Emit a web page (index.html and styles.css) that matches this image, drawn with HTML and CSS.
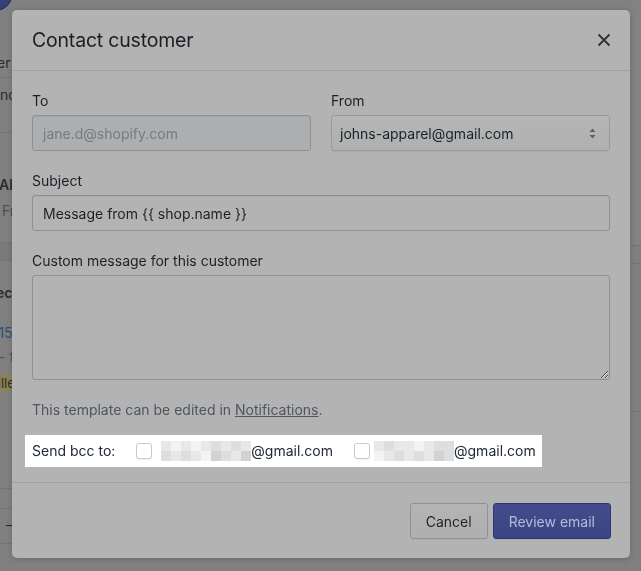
FILE: index.html
```html
<!DOCTYPE html>
<html lang="en">
<head>
    <meta charset="UTF-8">
    <title>Contact customer</title>
    <link rel="stylesheet" href="styles.css">
</head>
<body>
    <div class="page">
        <div class="side">
            <div class="side-top"><span class="avatar"></span></div>
            <div class="side-row r-name"><span class="t-name">Customer</span></div>
            <div class="side-row r-phone"><span class="t-phone">Phone no</span></div>
            <div class="side-row r-about"><b class="t-about">About</b><span class="t-from">From store</span></div>
            <div class="side-row r-band"></div>
            <div class="side-row r-order">
                <b class="t-recent">Recent orders</b>
                <span class="t-num">#1015</span>
                <span class="t-src">- from Online Store</span>
                <span class="t-badge">Unfulfilled</span>
            </div>
            <div class="side-row r-gap"></div>
            <div class="side-row r-dash"><span class="t-dash">–</span></div>
        </div>
        <div class="side side-right">
            <div class="right-top"></div>
            <div class="right-band"></div>
            <div class="right-mid"></div>
        </div>
    </div>

    <div class="backdrop">
        <div class="modal">
            <div class="modal-head">
                <h2>Contact customer</h2>
                <svg class="close" width="14" height="14" viewBox="0 0 14 14">
                    <path d="M1.5 1.5l11 11M12.5 1.5l-11 11" stroke="#2f3337" stroke-width="1.8" fill="none"/>
                </svg>
            </div>

            <div class="modal-body">
                <div class="cols">
                    <div class="field">
                        <div class="label">To</div>
                        <div class="input disabled">jane.d@shopify.com</div>
                    </div>
                    <div class="field">
                        <div class="label">From</div>
                        <div class="input select">
                            <span>johns-apparel@gmail.com</span>
                            <svg width="7" height="11" viewBox="0 0 7 11">
                                <path d="M3.5 0.5L6.5 4H0.5z M3.5 10.5L0.5 7H6.5z" fill="#5b6168"/>
                            </svg>
                        </div>
                    </div>
                </div>

                <div class="field">
                    <div class="label">Subject</div>
                    <div class="input">Message from {{ shop.name }}</div>
                </div>

                <div class="field">
                    <div class="label">Custom message for this customer</div>
                    <textarea class="textarea"></textarea>
                </div>

                <p class="help">This template can be edited in <a href="#">Notifications</a>.</p>

                <div class="bcc">
                    <span>Send bcc to:</span>
                    <span class="check first"></span>
                    <span class="blur">
                        <i class="s2"></i><i class="s1"></i><i class="s2"></i><i class="s1"></i><i class="s2"></i><i class="s3"></i><i class="s2"></i><i class="s3"></i><i class="s2"></i>
                        <i class="s3"></i><i class="s2"></i><i class="s3"></i><i class="s2"></i><i class="s1"></i><i class="s4"></i><i class="s3"></i><i class="s2"></i><i class="s4"></i>
                    </span>
                    <span>@gmail.com</span>
                    <span class="check"></span>
                    <span class="blur short">
                        <i class="s2"></i><i class="s3"></i><i class="s2"></i><i class="s2"></i><i class="s1"></i><i class="s2"></i><i class="s3"></i><i class="s3"></i>
                        <i class="s1"></i><i class="s2"></i><i class="s3"></i><i class="s2"></i><i class="s3"></i><i class="s2"></i><i class="s4"></i><i class="s3"></i>
                    </span>
                    <span>@gmail.com</span>
                </div>
            </div>

            <div class="modal-foot">
                <button class="btn">Cancel</button>
                <button class="btn primary">Review email</button>
            </div>
        </div>
    </div>
</body>
</html>
```

FILE: styles.css
```css
body
{
    margin: 0;
    height: 571px;
    overflow: hidden;
    background: #808080;
    font-family: Inter, "Liberation Sans", sans-serif;
    font-size: 14px;
    color: #1c2127;
}

/* page behind the modal */
.page
{
    display: flex;
    justify-content: space-between;
}
.side
{
    width: 12px;
    white-space: nowrap;
    color: #2a2d31;
    line-height: 20px;
}
.side-right
{
    width: 9px;
}
.side-top
{
    display: flow-root;
    height: 45px;
}
.avatar
{
    display: block;
    width: 34px;
    height: 34px;
    margin: -24px 0 0 -22px;
    border-radius: 50%;
    background: #34407a;
    box-shadow: 0 0 0 1px #2a3050;
}
.side-row
{
    border-bottom: 1px solid #747474;
}
.side-row span, .side-row b
{
    display: block;
}
.r-name
{
    height: 24px;
    padding-top: 8px;
}
.t-name
{
    margin-left: -54px;
}
.r-phone
{
    height: 47px;
    padding-top: 7px;
}
.t-phone
{
    margin-left: -46px;
}
.r-about
{
    height: 67px;
    padding-top: 42px;
}
.t-about
{
    margin-left: -1px;
    font-weight: 600;
}
.t-from
{
    margin: 6px 0 0 2px;
    color: #4a4f55;
}
.r-band
{
    height: 17px;
    background: #7a7a7a;
}
.r-order
{
    height: 205px;
    padding-top: 22px;
}
.t-recent
{
    margin-left: -13px;
    font-weight: 600;
}
.t-num
{
    margin: 20px 0 0 -25px;
    color: #2c4f78;
}
.t-src
{
    margin: 4px 0 0 -1px;
    color: #4a4f55;
}
.side-row .t-badge
{
    display: inline-block;
    margin: 8px 0 0 -48px;
    padding: 0 8px;
    line-height: 16px;
    font-size: 13px;
    background: #8e8452;
    border-radius: 8px;
}
.r-gap
{
    height: 19px;
}
.r-dash
{
    height: 28px;
    padding-top: 6px;
}
.t-dash
{
    margin-left: 6px;
}
.right-top
{
    height: 245px;
    background: #838383;
}
.right-band
{
    height: 17px;
    border-top: 1px solid #747474;
    border-bottom: 1px solid #747474;
}
.right-mid
{
    height: 147px;
    border-bottom: 1px solid #747474;
}

/* modal */
.backdrop
{
    position: fixed;
    top: 0;
    left: 0;
    right: 0;
    bottom: 0;
    padding: 10px 0 0 12px;
}
.modal
{
    display: flex;
    flex-direction: column;
    width: 618px;
    height: 548px;
    background: #b3b3b3;
    border-radius: 5px;
    box-shadow: 0 1px 6px rgba(0, 0, 0, .18);
}
.modal-head
{
    display: flex;
    align-items: center;
    justify-content: space-between;
    padding: 16px 19px 16px 20px;
    border-bottom: 1px solid #9ea0a2;
}
.modal-head h2
{
    margin: 0;
    font-size: 19.5px;
    font-weight: 400;
    line-height: 28px;
    letter-spacing: -0.2px;
    color: #1b1f24;
}
.close
{
    display: block;
}
.modal-body
{
    flex: 1;
    padding: 20px;
}
.cols
{
    display: grid;
    grid-template-columns: 1fr 1fr;
    gap: 20px;
}
.field
{
    margin-bottom: 20px;
}
.label
{
    line-height: 20px;
    margin-bottom: 4px;
}
.input
{
    display: flex;
    align-items: center;
    box-sizing: border-box;
    height: 36px;
    padding: 0 10px;
    border: 1px solid #8c9196;
    border-radius: 3px;
    background: #b3b3b3;
    box-shadow: inset 0 1px 0 rgba(0, 0, 0, .04);
}
.disabled
{
    background: #acaeb0;
    color: #767c83;
}
.select
{
    justify-content: space-between;
    padding: 0 13px 0 8px;
    border-color: #969a9f;
    background: linear-gradient(#b6b6b6, #afb0b1);
    box-shadow: 0 1px 0 rgba(0, 0, 0, .04);
}
.textarea
{
    display: block;
    box-sizing: border-box;
    width: 100%;
    height: 105px;
    margin: 0;
    border: 1px solid #8c9196;
    border-radius: 3px;
    background: #b3b3b3;
    font: inherit;
}
.help
{
    margin: 0 0 20px;
    line-height: 20px;
    color: #4e5660;
}
.help a
{
    color: #4e5660;
}

/* highlighted row */
.bcc
{
    display: flex;
    align-items: center;
    width: fit-content;
    margin: -5px -7px;
    padding: 6px 6px 6px 7px;
    line-height: 20px;
    background: #fff;
    color: #212b36;
}
.check
{
    box-sizing: border-box;
    width: 16px;
    height: 16px;
    margin: 0 4px 0 21px;
    border: 1px solid #c4cdd5;
    border-radius: 3px;
    background: #fff;
    box-shadow: 0 1px 0 rgba(22, 29, 37, .05);
}
.check.first
{
    margin-right: 9px;
}
.blur
{
    display: grid;
    grid-template-columns: repeat(9, 10px);
    grid-auto-rows: 10px;
}
.blur.short
{
    grid-template-columns: repeat(8, 10px);
}
.blur i
{
    display: block;
}
.s1
{
    background: #f3f3f3;
}
.s2
{
    background: #e8e8e8;
}
.s3
{
    background: #dedede;
}
.s4
{
    background: #d2d2d2;
}

/* footer */
.modal-foot
{
    display: flex;
    justify-content: flex-end;
    gap: 5px;
    padding: 20px 19px 20px 20px;
    border-top: 1px solid #9ea0a2;
}
.btn
{
    height: 36px;
    padding: 0 15px;
    border: 1px solid #8e9298;
    border-radius: 3px;
    background: linear-gradient(#b4b4b4, #aeafb0);
    font: inherit;
    color: #1f242a;
    box-shadow: 0 1px 0 rgba(0, 0, 0, .04);
}
.primary
{
    border-color: #2d3679;
    background: linear-gradient(#434d8a, #3c4585);
    color: #b7badb;
}
```
